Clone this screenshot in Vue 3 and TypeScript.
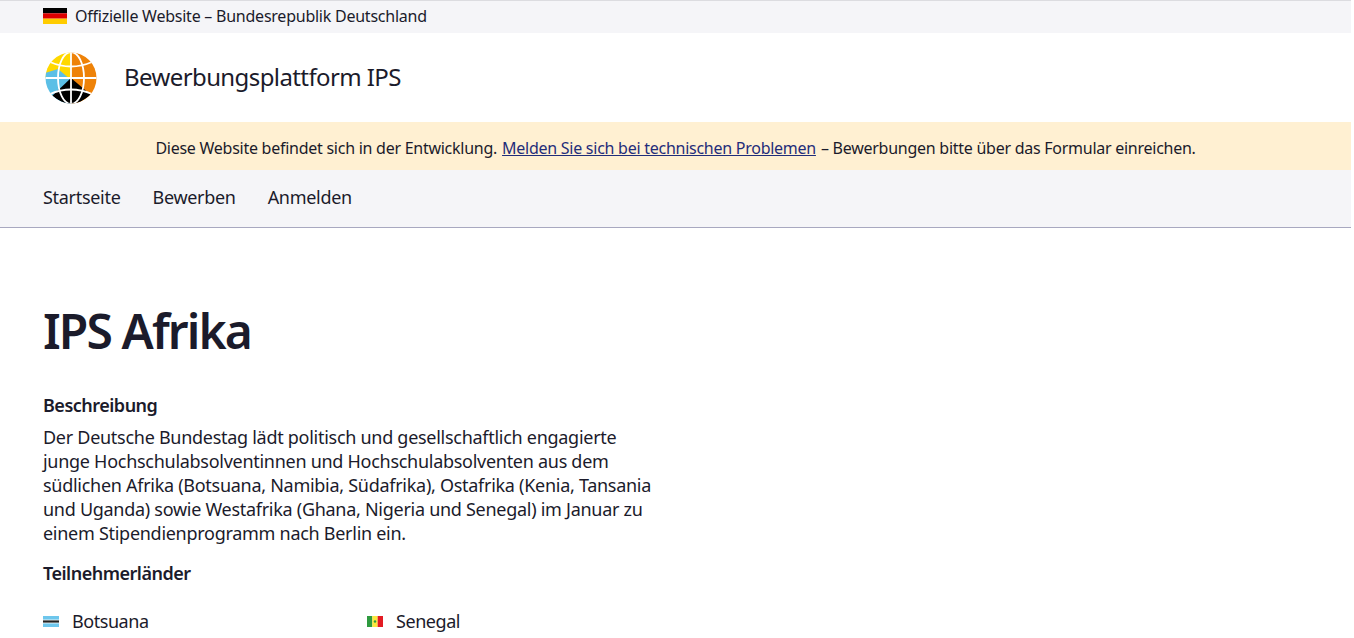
<script setup lang="ts">
interface Country { name: string; stripes: string }
const navItems: string[] = ['Startseite', 'Bewerben', 'Anmelden']
const leftCountries: Country[] = [
  { name: 'Botsuana', stripes: '' },
  { name: 'Ghana', stripes: 'linear-gradient(#ce1126 33%, #fcd116 33% 66%, #006b3f 66%)' },
  { name: 'Kenia', stripes: 'linear-gradient(#000 33%, #b00 33% 66%, #060 66%)' },
  { name: 'Namibia', stripes: 'linear-gradient(135deg, #003580 40%, #c8102e 40% 60%, #009a44 60%)' },
  { name: 'Nigeria', stripes: 'linear-gradient(90deg, #008751 33%, #fff 33% 66%, #008751 66%)' },
]
const rightCountries: Country[] = [
  { name: 'Senegal', stripes: '' },
  { name: 'Südafrika', stripes: 'linear-gradient(#e03c31 40%, #007749 40% 60%, #001489 60%)' },
  { name: 'Tansania', stripes: 'linear-gradient(135deg, #1eb53a 40%, #000 40% 60%, #00a3dd 60%)' },
  { name: 'Uganda', stripes: 'linear-gradient(#000 33%, #fcdc04 33% 66%, #d90000 66%)' },
]
</script>

<template>
  <div class="page">
    <div class="official">
      <svg class="de-flag" width="24" height="16" viewBox="0 0 24 16">
        <rect width="24" height="5.33" fill="#000" />
        <rect y="5.33" width="24" height="5.33" fill="#d00" />
        <rect y="10.66" width="24" height="5.34" fill="#fc0" />
      </svg>
      <span>Offizielle Website – Bundesrepublik Deutschland</span>
    </div>
    <header class="brand">
      <svg class="logo" width="52" height="52" viewBox="0 0 52 52">
        <defs>
          <clipPath id="globe"><circle cx="26" cy="26" r="25.5" /></clipPath>
        </defs>
        <g clip-path="url(#globe)">
          <rect width="26" height="26" fill="#ffd800" />
          <rect x="26" width="26" height="52" fill="#ee8208" />
          <path d="M0 21 L13 17 L26 28 L26 52 L0 52 Z" fill="#5bbfe6" />
          <path d="M26 26 L46 43 L26 56 L7 44 Z" fill="#000" />
        </g>
        <g fill="none" stroke="#fff" stroke-width="1.8" clip-path="url(#globe)">
          <path d="M26 0 V52 M0 26 H52" />
          <ellipse cx="26" cy="26" rx="13" ry="26" />
          <path d="M5 10 Q26 19 47 10 M5 42 Q26 33 47 42" />
        </g>
      </svg>
      <span class="brand-name">Bewerbungsplattform IPS</span>
    </header>
    <div class="notice">
      <span>Diese Website befindet sich in der Entwicklung.</span>
      <a href="#">Melden Sie sich bei technischen Problemen</a>
      <span>– Bewerbungen bitte über das Formular einreichen.</span>
    </div>
    <nav class="nav">
      <a v-for="item in navItems" :key="item" href="#">{{ item }}</a>
    </nav>
    <main class="main">
      <h1>IPS Afrika</h1>
      <h2>Beschreibung</h2>
      <p>
        Der Deutsche Bundestag lädt politisch und gesellschaftlich engagierte
        junge Hochschulabsolventinnen und Hochschulabsolventen aus dem
        südlichen Afrika (Botsuana, Namibia, Südafrika), Ostafrika (Kenia, Tansania
        und Uganda) sowie Westafrika (Ghana, Nigeria und Senegal) im Januar zu
        einem Stipendienprogramm nach Berlin ein.
      </p>
      <h2 class="second">Teilnehmerländer</h2>
      <div class="countries">
        <ul>
          <li v-for="c in leftCountries" :key="c.name">
            <svg v-if="!c.stripes" class="flag" width="16" height="11" viewBox="0 0 16 11">
              <rect width="16" height="11" fill="#6dc6ec" />
              <rect y="3.6" width="16" height="3.8" fill="#fff" />
              <rect y="4.4" width="16" height="2.2" fill="#222" />
            </svg>
            <span v-else class="flag" :style="{ background: c.stripes }"></span>
            <span>{{ c.name }}</span>
          </li>
        </ul>
        <ul>
          <li v-for="c in rightCountries" :key="c.name">
            <svg v-if="!c.stripes" class="flag" width="16" height="11" viewBox="0 0 16 11">
              <rect width="5.33" height="11" fill="#2e9a3f" />
              <rect x="5.33" width="5.33" height="11" fill="#fbe83c" />
              <rect x="10.66" width="5.34" height="11" fill="#e31b23" />
              <circle cx="8" cy="5.5" r="1.2" fill="#2e9a3f" />
            </svg>
            <span v-else class="flag" :style="{ background: c.stripes }"></span>
            <span>{{ c.name }}</span>
          </li>
        </ul>
      </div>
    </main>
  </div>
</template>

<style>
html, body { margin: 0; overflow: hidden; background: #fff; }
</style>

<style scoped>
.page {
  width: 1351px;
  font-family: "Noto Sans", "Open Sans", sans-serif;
  font-size: 18px;
  letter-spacing: -0.28px;
  color: #1b1b2b;
}
.official {
  box-sizing: border-box;
  height: 33px;
  border-top: 1px solid #dcdce0;
  background: #f5f5f8;
  display: flex;
  align-items: center;
  gap: 8px;
  padding: 0 0 2px 43px;
  font-size: 16px;
  letter-spacing: -0.24px;
}
.brand {
  box-sizing: border-box;
  height: 89px;
  display: flex;
  align-items: center;
  padding-left: 45px;
  gap: 27px;
}
.brand-name { font-size: 24px; letter-spacing: -0.6px; margin-bottom: 2px; }
.notice {
  box-sizing: border-box;
  height: 48px;
  padding-top: 3px;
  background: #fff0d2;
  display: flex;
  align-items: center;
  justify-content: center;
  gap: 5px;
  font-size: 16px;
  letter-spacing: -0.26px;
}
.notice a { color: #1f2d7a; }
.nav {
  box-sizing: border-box;
  height: 58px;
  padding: 0 0 4px 43px;
  background: #f5f5f8;
  border-bottom: 1px solid #a8a8c0;
  display: flex;
  align-items: center;
  gap: 32px;
  letter-spacing: -0.3px;
}
.nav a { color: #1b1b2b; text-decoration: none; }
.main { padding: 73px 43px 0; }
h1 { margin: 0 0 32px; font-size: 48px; line-height: 60px; font-weight: 600; letter-spacing: -1.9px; }
h2 { margin: 0 0 8px; font-size: 18px; line-height: 24px; font-weight: 600; letter-spacing: -0.5px; }
h2.second { margin-top: 16px; }
p { margin: 0; width: 620px; line-height: 24px; }
.countries { display: flex; margin-top: 24px; }
ul { list-style: none; margin: 0; padding: 0; width: 324px; }
li { display: flex; align-items: center; gap: 13px; height: 24px; letter-spacing: -0.45px; }
.flag { flex: none; width: 16px; height: 11px; }
</style>
